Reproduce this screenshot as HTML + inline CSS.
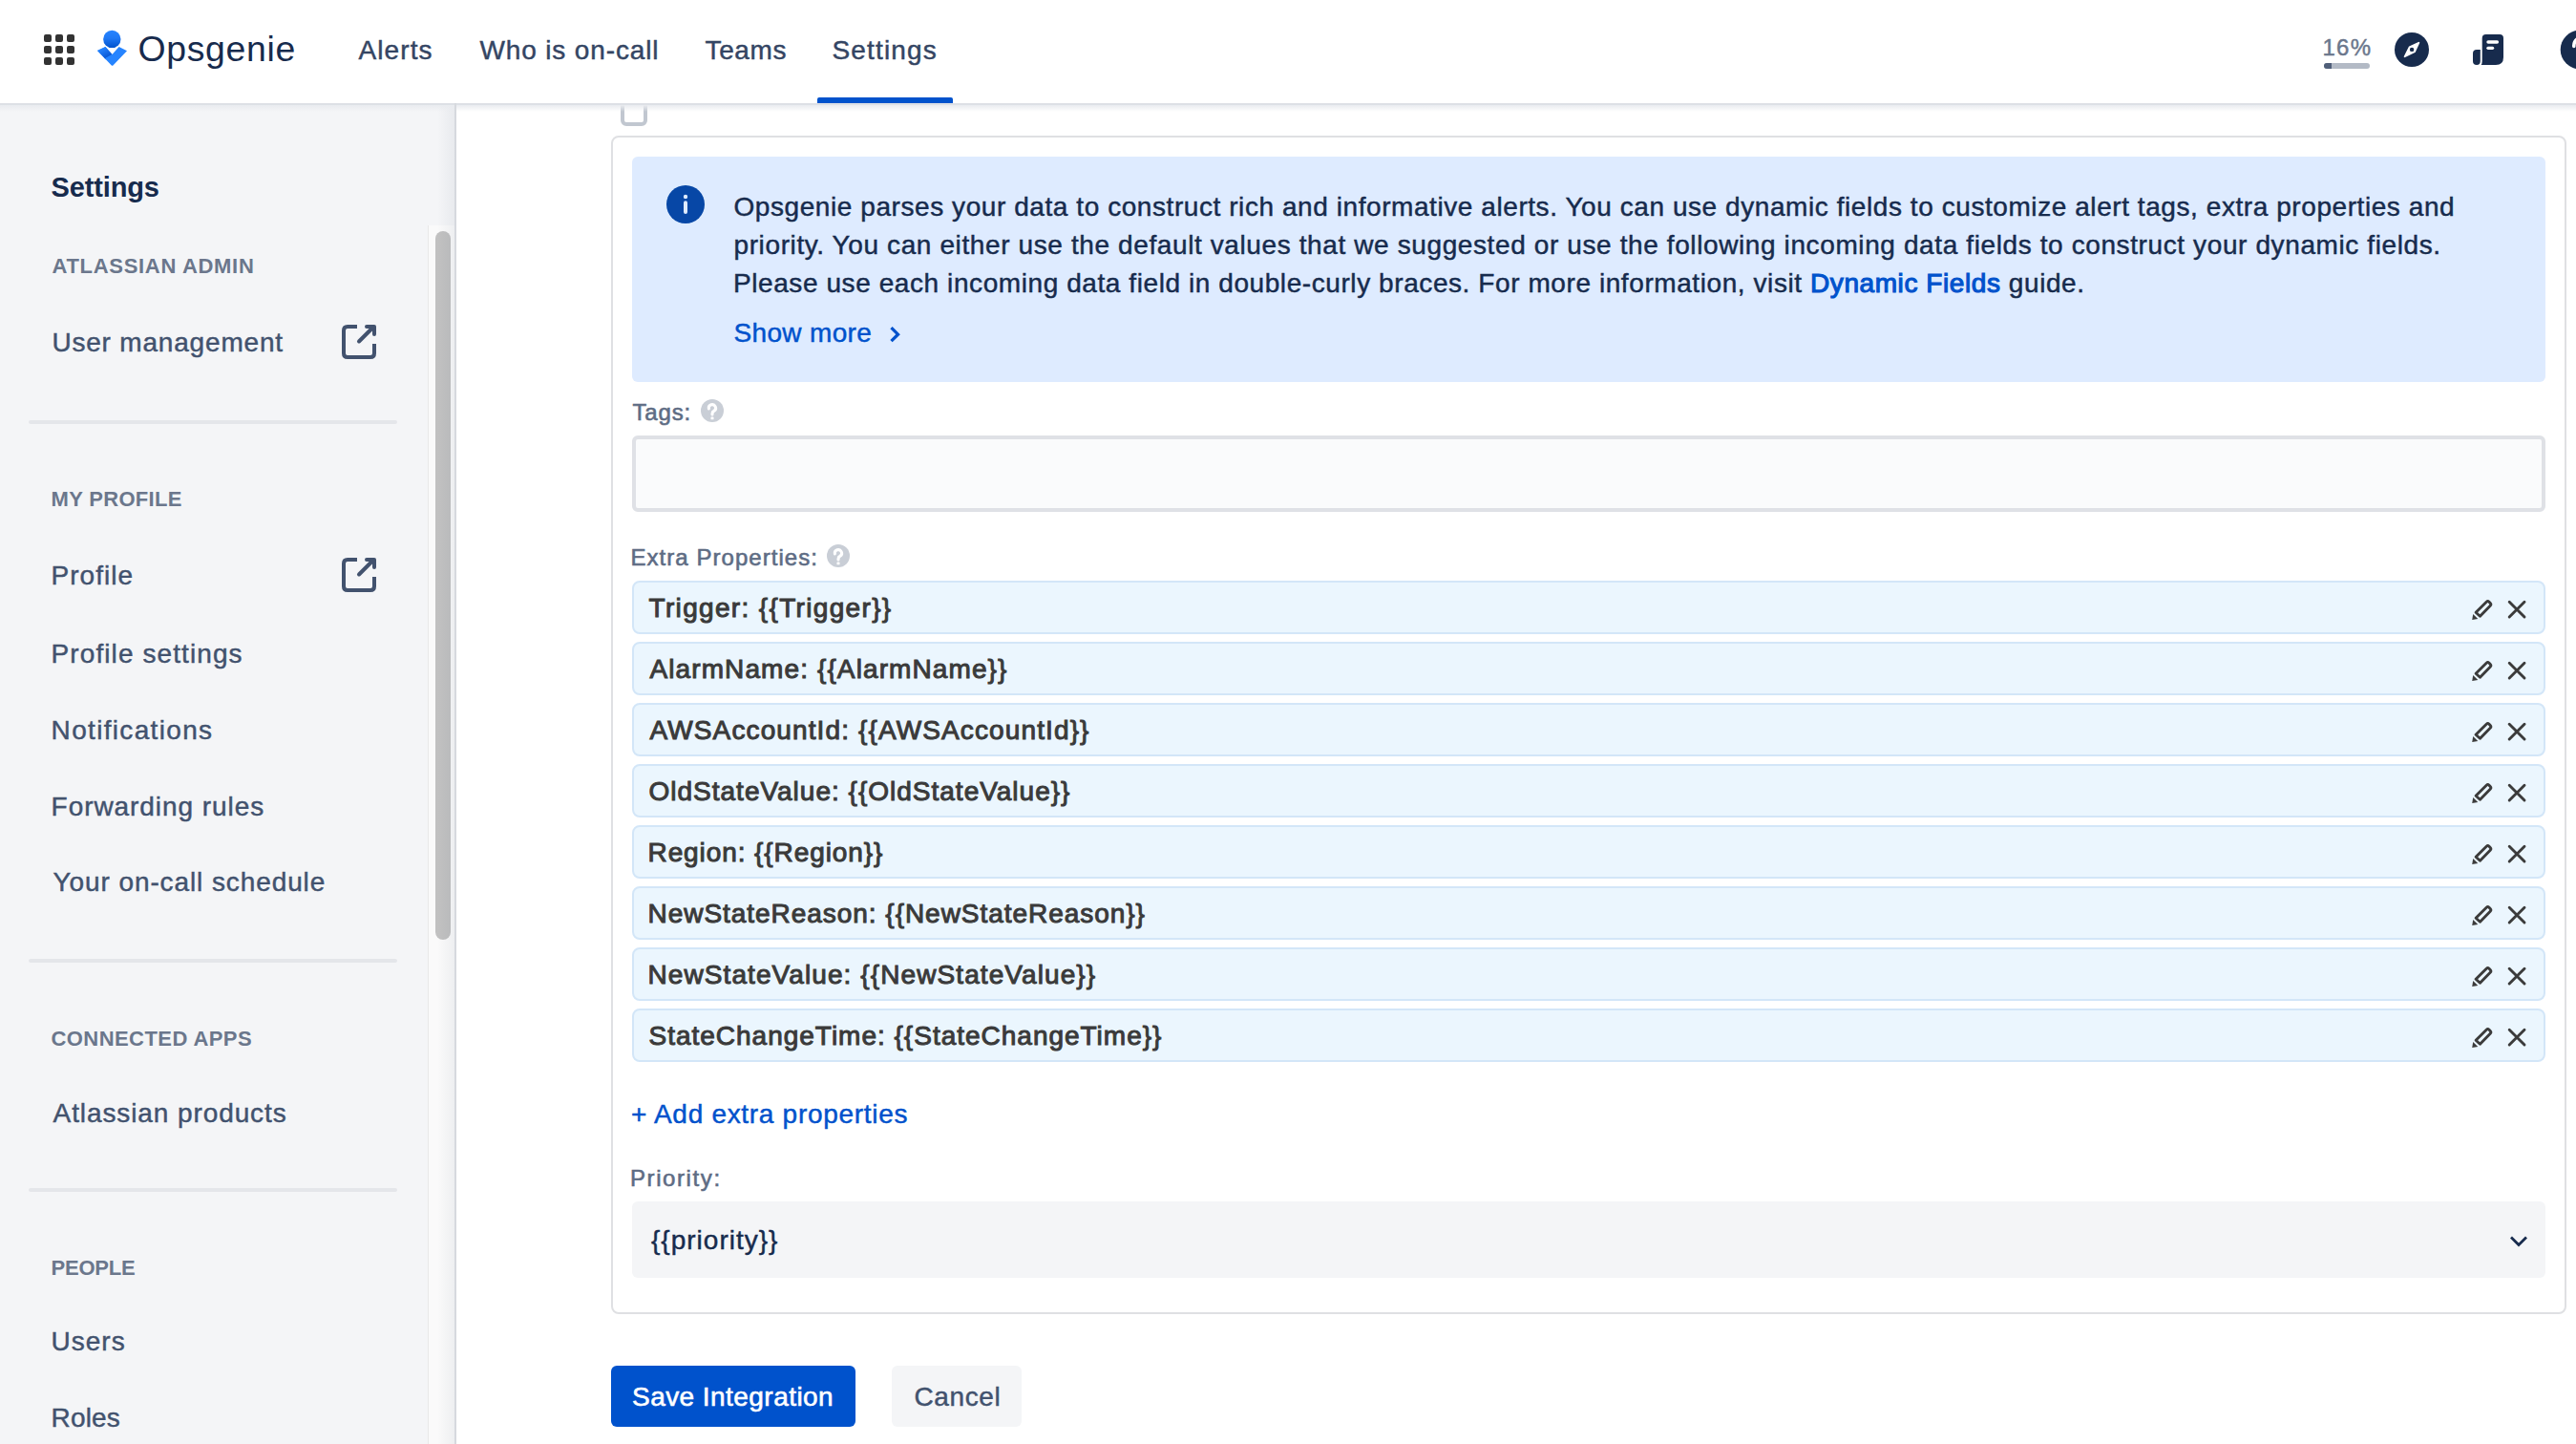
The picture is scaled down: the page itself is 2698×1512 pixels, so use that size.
<!DOCTYPE html>
<html><head><meta charset="utf-8">
<style>
html,body{margin:0;padding:0;width:2698px;height:1512px;overflow:hidden;background:#fff;}
body{position:relative;font-family:"Liberation Sans",sans-serif;}
.a{position:absolute;}
.t{position:absolute;white-space:nowrap;line-height:40px;font-family:"Liberation Sans",sans-serif;-webkit-text-stroke-width:0.45px;}
.sw0{-webkit-text-stroke-width:0!important}
.sw5{-webkit-text-stroke-width:0.6px!important}
.sw7{-webkit-text-stroke-width:1.0px!important}
</style></head><body>

<div class="a" style="left:650px;top:100px;width:28px;height:32px;box-sizing:border-box;border:4px solid #c1c7d0;border-radius:6px;"></div>
<!-- ============ HEADER ============ -->
<div class="a" style="left:0;top:0;width:2698px;height:108px;background:#fff;"></div>
<div class="a" style="left:0;top:108px;width:2698px;height:2px;background:#dde0e5;z-index:5"></div>
<div class="a" style="left:0;top:110px;width:2698px;height:7px;background:linear-gradient(#e9ebef,rgba(255,255,255,0));z-index:5"></div>

<!-- grid icon -->
<svg class="a" style="left:46px;top:36px" width="32" height="32" viewBox="0 0 32 32">
<g fill="#333">
<rect x="0" y="0" width="8" height="8" rx="2"/><rect x="12" y="0" width="8" height="8" rx="2"/><rect x="24" y="0" width="8" height="8" rx="2"/>
<rect x="0" y="12" width="8" height="8" rx="2"/><rect x="12" y="12" width="8" height="8" rx="2"/><rect x="24" y="12" width="8" height="8" rx="2"/>
<rect x="0" y="24" width="8" height="8" rx="2"/><rect x="12" y="24" width="8" height="8" rx="2"/><rect x="24" y="24" width="8" height="8" rx="2"/>
</g></svg>

<!-- logo -->
<svg class="a" style="left:100px;top:30px" width="36" height="42" viewBox="0 0 36 42">
<defs>
<linearGradient id="hg" x1="0" y1="0" x2="0" y2="1"><stop offset="0" stop-color="#2684ff"/><stop offset="0.45" stop-color="#1f78f5"/><stop offset="1" stop-color="#0052cc"/></linearGradient>
<linearGradient id="lg" gradientUnits="userSpaceOnUse" x1="6" y1="21" x2="11" y2="30"><stop offset="0" stop-color="#2684ff"/><stop offset="1" stop-color="#0a5ad6"/></linearGradient>
</defs>
<circle cx="17.3" cy="10.9" r="9.2" fill="url(#hg)"/>
<path d="M2 23 L10.4 19.1 L17.5 27 L24.6 18.9 L33 23.2 L18.4 38.4 Q17.6 39.2 16.8 38.4 Z" fill="#2684ff"/>
<path d="M2 23 L10.4 19.1 L17.5 27 L9.9 31.2 Z" fill="url(#lg)"/>
<path d="M9.6 31.5 L17.5 27 L18.2 27.8 L10.4 32.3 Z" fill="#2684ff"/>
</svg>

<div class="t sw0" id="opsg" style="left:144.5px;top:31px;font-size:37.4px;color:#172b4d;letter-spacing:0.68px;">Opsgenie</div>

<div class="t" id="nav1" style="left:375.5px;top:33px;font-size:28px;color:#344563;letter-spacing:1.10px">Alerts</div>
<div class="t" id="nav2" style="left:502.5px;top:33px;font-size:28px;color:#344563;letter-spacing:0.86px">Who is on-call</div>
<div class="t" id="nav3" style="left:738.5px;top:33px;font-size:28px;color:#344563;letter-spacing:0.65px">Teams</div>
<div class="t" id="navS" style="left:871.5px;top:33px;font-size:28px;color:#344563;letter-spacing:1.16px">Settings</div>
<div class="a" style="left:856px;top:102px;width:142px;height:6px;background:#0052cc;border-radius:2px 2px 0 0"></div>

<div class="t" id="pct" style="left:2432.5px;top:30px;font-size:24px;color:#6b778c;letter-spacing:1.25px">16%</div>
<div class="a" style="left:2434px;top:66px;width:48px;height:6px;background:#b3bac5;border-radius:3px;overflow:hidden"><div style="width:8px;height:6px;background:#505f79"></div></div>

<!-- compass -->
<svg class="a" style="left:2508px;top:34px" width="36" height="36" viewBox="0 0 36 36">
<circle cx="18" cy="18" r="18" fill="#172b4d"/>
<path d="M10.6 25.3 L20.9 20.3 L25.4 10.7 L15.6 15.4 Z" fill="#fff" stroke="#fff" stroke-width="1.8" stroke-linejoin="round"/>
<circle cx="18.1" cy="17.9" r="2.2" fill="#172b4d"/>
</svg>

<!-- doc icon -->
<svg class="a" style="left:2588px;top:34px" width="36" height="36" viewBox="0 0 36 36">
<path d="M15.7 2 H30 Q34 2 34 6 V26 Q34 34 26 34 H10.5 Q11.7 33 11.7 30 V6 Q11.7 2 15.7 2 Z" fill="#172b4d"/>
<path d="M6 17.9 H9.8 V30 Q9.8 34 6 34 Q2 34 2 30 V21.9 Q2 17.9 6 17.9 Z" fill="#172b4d"/>
<rect x="16.3" y="8.2" width="12.8" height="3.5" rx="1.75" fill="#fff"/>
<rect x="16.3" y="14.7" width="7.9" height="3.2" rx="1.6" fill="#fff"/>
</svg>

<!-- help icon (cut) -->
<svg class="a" style="left:2681px;top:31px" width="17" height="42" viewBox="0 0 17 42">
<circle cx="21" cy="21" r="20.3" fill="#172b4d"/>
<path d="M14.8 17.4 Q14.6 12.5 18.5 9.6" stroke="#fff" stroke-width="3.6" fill="none" stroke-linecap="round"/>
</svg>

<!-- ============ SIDEBAR ============ -->
<div class="a" style="left:0;top:108px;width:478px;height:1404px;background:#f4f5f7;"></div>

<div class="t sw0" id="sbS" style="left:53.6px;top:176px;font-size:29px;font-weight:700;color:#172b4d;letter-spacing:-0.15px">Settings</div>

<div class="t sw0" id="h1" style="left:54.5px;top:259px;font-size:22px;font-weight:700;color:#6b778c;letter-spacing:0.69px">ATLASSIAN ADMIN</div>
<div class="t" id="s1" style="left:54.4px;top:339px;font-size:28px;color:#42526e;letter-spacing:0.81px">User management</div>
<svg class="a" style="left:358px;top:340px" width="36" height="36" viewBox="0 0 36 36"><g fill="none" stroke="#42526e" stroke-width="4"><path d="M16 2 H6 Q2 2 2 6 V30 Q2 34 6 34 H30 Q34 34 34 30 V20" /><path d="M26 2 H34 V10" stroke-linecap="round" stroke-linejoin="round"/><path d="M18 17.5 L32.5 3" stroke-linecap="round"/></g></svg>
<div class="a" style="left:30px;top:440px;width:386px;height:4px;background:#e4e6ea;border-radius:2px"></div>

<div class="t sw0" id="h2" style="left:53.5px;top:503px;font-size:22px;font-weight:700;color:#6b778c;letter-spacing:0.32px">MY PROFILE</div>
<div class="t" id="s2" style="left:53.6px;top:583px;font-size:28px;color:#42526e;letter-spacing:1.01px">Profile</div>
<svg class="a" style="left:358px;top:584px" width="36" height="36" viewBox="0 0 36 36"><g fill="none" stroke="#42526e" stroke-width="4"><path d="M16 2 H6 Q2 2 2 6 V30 Q2 34 6 34 H30 Q34 34 34 30 V20" /><path d="M26 2 H34 V10" stroke-linecap="round" stroke-linejoin="round"/><path d="M18 17.5 L32.5 3" stroke-linecap="round"/></g></svg>
<div class="t" id="s3" style="left:53.6px;top:665px;font-size:28px;color:#42526e;letter-spacing:1.09px">Profile settings</div>
<div class="t" id="s4" style="left:53.6px;top:745px;font-size:28px;color:#42526e;letter-spacing:1.33px">Notifications</div>
<div class="t" id="s5" style="left:53.6px;top:825px;font-size:28px;color:#42526e;letter-spacing:0.94px">Forwarding rules</div>
<div class="t" id="s6" style="left:55.6px;top:904px;font-size:28px;color:#42526e;letter-spacing:0.90px">Your on-call schedule</div>
<div class="a" style="left:30px;top:1004px;width:386px;height:4px;background:#e4e6ea;border-radius:2px"></div>

<div class="t sw0" id="h3" style="left:53.5px;top:1068px;font-size:22px;font-weight:700;color:#6b778c;letter-spacing:0.43px">CONNECTED APPS</div>
<div class="t" id="s7" style="left:55.6px;top:1146px;font-size:28px;color:#42526e;letter-spacing:0.90px">Atlassian products</div>
<div class="a" style="left:30px;top:1244px;width:386px;height:4px;background:#e4e6ea;border-radius:2px"></div>

<div class="t sw0" id="h4" style="left:53.5px;top:1308px;font-size:22px;font-weight:700;color:#6b778c;letter-spacing:-0.20px">PEOPLE</div>
<div class="t" id="s8" style="left:53.6px;top:1385px;font-size:28px;color:#42526e;letter-spacing:0.98px">Users</div>
<div class="t" id="s9" style="left:53.6px;top:1465px;font-size:28px;color:#42526e;letter-spacing:0.17px">Roles</div>

<!-- scrollbar -->
<div class="a" style="left:448px;top:236px;width:28px;height:1276px;background:#fafafa;border-left:1px solid #e8e8e8;box-sizing:border-box"></div>
<div class="a" style="left:456px;top:242px;width:16px;height:742px;background:#c1c1c1;border-radius:8px"></div>
<div class="a" style="left:458px;top:108px;width:18px;height:1404px;background:linear-gradient(90deg,rgba(9,30,66,0),rgba(9,30,66,0.05));"></div>
<div class="a" style="left:476px;top:108px;width:2px;height:1404px;background:#d6d9de;z-index:6"></div>

<!-- ============ MAIN ============ -->

<div class="a" style="left:640px;top:142px;width:2048px;height:1234px;box-sizing:border-box;border:2px solid #dfe0e3;border-radius:8px;"></div>

<!-- info box -->
<div class="a" style="left:662px;top:164px;width:2004px;height:236px;background:#deebff;border-radius:6px;"></div>
<svg class="a" style="left:698px;top:194px" width="40" height="40" viewBox="0 0 40 40"><circle cx="20" cy="20" r="20" fill="#0747a6"/><circle cx="20" cy="12" r="2.2" fill="#deebff"/><rect x="18" y="16.3" width="4" height="13.8" rx="2" fill="#deebff"/></svg>
<div class="t" id="info1" style="left:768.5px;top:197px;font-size:28px;color:#172b4d;letter-spacing:0.57px">Opsgenie parses your data to construct rich and informative alerts. You can use dynamic fields to customize alert tags, extra properties and</div>
<div class="t" id="info2" style="left:768.5px;top:237px;font-size:28px;color:#172b4d;letter-spacing:0.61px">priority. You can either use the default values that we suggested or use the following incoming data fields to construct your dynamic fields.</div>
<div class="t" id="info3" style="left:768.0px;top:277px;font-size:28px;color:#172b4d;letter-spacing:0.58px">Please use each incoming data field in double-curly braces. For more information, visit <span style="color:#0052cc;-webkit-text-stroke-width:1.1px">Dynamic Fields</span> guide.</div>
<div class="t" id="showmore" style="left:768.5px;top:329px;font-size:28px;color:#0052cc;letter-spacing:0.34px">Show more</div>
<svg class="a" style="left:930px;top:340px" width="16" height="20" viewBox="0 0 16 20"><path d="M3.5 3.2 L10.5 10.2 L3.5 17.2" fill="none" stroke="#0052cc" stroke-width="3.3"/></svg>

<!-- Tags -->
<div class="t sw5" id="tags" style="left:662.5px;top:412px;font-size:24px;color:#5e6c84;letter-spacing:0.85px">Tags:</div>
<svg class="a" style="left:734px;top:418px" width="24" height="24" viewBox="0 0 24 24"><circle cx="12" cy="12" r="12" fill="#c9ced6"/><path d="M8.4 9.9 A3.6 3.6 0 1 1 14 12.2 Q12 13.3 12 15.2 V16" fill="none" stroke="#fff" stroke-width="3.1" stroke-linecap="round"/><rect x="10.5" y="18.5" width="3" height="2.8" rx="0.6" fill="#fff"/></svg>
<div class="a" style="left:662px;top:456px;width:2004px;height:80px;box-sizing:border-box;background:#fafbfc;border:4px solid #dfe1e6;border-radius:6px;"></div>

<!-- Extra properties -->
<div class="t sw5" id="extra" style="left:660.5px;top:564px;font-size:24px;color:#5e6c84;letter-spacing:1.04px">Extra Properties:</div>
<svg class="a" style="left:866px;top:570px" width="24" height="24" viewBox="0 0 24 24"><circle cx="12" cy="12" r="12" fill="#c9ced6"/><path d="M8.4 9.9 A3.6 3.6 0 1 1 14 12.2 Q12 13.3 12 15.2 V16" fill="none" stroke="#fff" stroke-width="3.1" stroke-linecap="round"/><rect x="10.5" y="18.5" width="3" height="2.8" rx="0.6" fill="#fff"/></svg>

<!--ROWS-->
<div class="a" style="left:662px;top:608px;width:2004px;height:56px;box-sizing:border-box;background:#ebf6fe;border:2px solid #d3e6f8;border-radius:8px;"></div>
<div class="t sw7" id="row0" style="left:679.5px;top:617px;font-size:28px;color:#3a3a3a;letter-spacing:1.34px">Trigger: {{Trigger}}</div>
<svg class="a" style="left:2586px;top:616px" width="64" height="40" viewBox="0 0 64 40"><g fill="#3b3b3b"><path d="M3.2 32.9 L4.2 27.1 L9.3 31.9 Z"/></g><g fill="none" stroke="#3b3b3b" stroke-width="2.9"><path d="M7.1 25.2 L18.2 14.2 Q19.6 12.9 21 14.3 L22.2 15.6 Q23.5 17 22.2 18.3 L11.5 29.3 Z" stroke-linejoin="round"/><path d="M42.2 14.2 L58 30 M58 14.2 L42.2 30" stroke-linecap="round"/></g></svg>
<div class="a" style="left:662px;top:672px;width:2004px;height:56px;box-sizing:border-box;background:#ebf6fe;border:2px solid #d3e6f8;border-radius:8px;"></div>
<div class="t sw7" id="row1" style="left:680.5px;top:681px;font-size:28px;color:#3a3a3a;letter-spacing:1.10px">AlarmName: {{AlarmName}}</div>
<svg class="a" style="left:2586px;top:680px" width="64" height="40" viewBox="0 0 64 40"><g fill="#3b3b3b"><path d="M3.2 32.9 L4.2 27.1 L9.3 31.9 Z"/></g><g fill="none" stroke="#3b3b3b" stroke-width="2.9"><path d="M7.1 25.2 L18.2 14.2 Q19.6 12.9 21 14.3 L22.2 15.6 Q23.5 17 22.2 18.3 L11.5 29.3 Z" stroke-linejoin="round"/><path d="M42.2 14.2 L58 30 M58 14.2 L42.2 30" stroke-linecap="round"/></g></svg>
<div class="a" style="left:662px;top:736px;width:2004px;height:56px;box-sizing:border-box;background:#ebf6fe;border:2px solid #d3e6f8;border-radius:8px;"></div>
<div class="t sw7" id="row2" style="left:680.5px;top:745px;font-size:28px;color:#3a3a3a;letter-spacing:1.12px">AWSAccountId: {{AWSAccountId}}</div>
<svg class="a" style="left:2586px;top:744px" width="64" height="40" viewBox="0 0 64 40"><g fill="#3b3b3b"><path d="M3.2 32.9 L4.2 27.1 L9.3 31.9 Z"/></g><g fill="none" stroke="#3b3b3b" stroke-width="2.9"><path d="M7.1 25.2 L18.2 14.2 Q19.6 12.9 21 14.3 L22.2 15.6 Q23.5 17 22.2 18.3 L11.5 29.3 Z" stroke-linejoin="round"/><path d="M42.2 14.2 L58 30 M58 14.2 L42.2 30" stroke-linecap="round"/></g></svg>
<div class="a" style="left:662px;top:800px;width:2004px;height:56px;box-sizing:border-box;background:#ebf6fe;border:2px solid #d3e6f8;border-radius:8px;"></div>
<div class="t sw7" id="row3" style="left:679.5px;top:809px;font-size:28px;color:#3a3a3a;letter-spacing:1.00px">OldStateValue: {{OldStateValue}}</div>
<svg class="a" style="left:2586px;top:808px" width="64" height="40" viewBox="0 0 64 40"><g fill="#3b3b3b"><path d="M3.2 32.9 L4.2 27.1 L9.3 31.9 Z"/></g><g fill="none" stroke="#3b3b3b" stroke-width="2.9"><path d="M7.1 25.2 L18.2 14.2 Q19.6 12.9 21 14.3 L22.2 15.6 Q23.5 17 22.2 18.3 L11.5 29.3 Z" stroke-linejoin="round"/><path d="M42.2 14.2 L58 30 M58 14.2 L42.2 30" stroke-linecap="round"/></g></svg>
<div class="a" style="left:662px;top:864px;width:2004px;height:56px;box-sizing:border-box;background:#ebf6fe;border:2px solid #d3e6f8;border-radius:8px;"></div>
<div class="t sw7" id="row4" style="left:678.5px;top:873px;font-size:28px;color:#3a3a3a;letter-spacing:0.91px">Region: {{Region}}</div>
<svg class="a" style="left:2586px;top:872px" width="64" height="40" viewBox="0 0 64 40"><g fill="#3b3b3b"><path d="M3.2 32.9 L4.2 27.1 L9.3 31.9 Z"/></g><g fill="none" stroke="#3b3b3b" stroke-width="2.9"><path d="M7.1 25.2 L18.2 14.2 Q19.6 12.9 21 14.3 L22.2 15.6 Q23.5 17 22.2 18.3 L11.5 29.3 Z" stroke-linejoin="round"/><path d="M42.2 14.2 L58 30 M58 14.2 L42.2 30" stroke-linecap="round"/></g></svg>
<div class="a" style="left:662px;top:928px;width:2004px;height:56px;box-sizing:border-box;background:#ebf6fe;border:2px solid #d3e6f8;border-radius:8px;"></div>
<div class="t sw7" id="row5" style="left:678.5px;top:937px;font-size:28px;color:#3a3a3a;letter-spacing:0.96px">NewStateReason: {{NewStateReason}}</div>
<svg class="a" style="left:2586px;top:936px" width="64" height="40" viewBox="0 0 64 40"><g fill="#3b3b3b"><path d="M3.2 32.9 L4.2 27.1 L9.3 31.9 Z"/></g><g fill="none" stroke="#3b3b3b" stroke-width="2.9"><path d="M7.1 25.2 L18.2 14.2 Q19.6 12.9 21 14.3 L22.2 15.6 Q23.5 17 22.2 18.3 L11.5 29.3 Z" stroke-linejoin="round"/><path d="M42.2 14.2 L58 30 M58 14.2 L42.2 30" stroke-linecap="round"/></g></svg>
<div class="a" style="left:662px;top:992px;width:2004px;height:56px;box-sizing:border-box;background:#ebf6fe;border:2px solid #d3e6f8;border-radius:8px;"></div>
<div class="t sw7" id="row6" style="left:678.5px;top:1001px;font-size:28px;color:#3a3a3a;letter-spacing:1.09px">NewStateValue: {{NewStateValue}}</div>
<svg class="a" style="left:2586px;top:1000px" width="64" height="40" viewBox="0 0 64 40"><g fill="#3b3b3b"><path d="M3.2 32.9 L4.2 27.1 L9.3 31.9 Z"/></g><g fill="none" stroke="#3b3b3b" stroke-width="2.9"><path d="M7.1 25.2 L18.2 14.2 Q19.6 12.9 21 14.3 L22.2 15.6 Q23.5 17 22.2 18.3 L11.5 29.3 Z" stroke-linejoin="round"/><path d="M42.2 14.2 L58 30 M58 14.2 L42.2 30" stroke-linecap="round"/></g></svg>
<div class="a" style="left:662px;top:1056px;width:2004px;height:56px;box-sizing:border-box;background:#ebf6fe;border:2px solid #d3e6f8;border-radius:8px;"></div>
<div class="t sw7" id="row7" style="left:679.5px;top:1065px;font-size:28px;color:#3a3a3a;letter-spacing:0.99px">StateChangeTime: {{StateChangeTime}}</div>
<svg class="a" style="left:2586px;top:1064px" width="64" height="40" viewBox="0 0 64 40"><g fill="#3b3b3b"><path d="M3.2 32.9 L4.2 27.1 L9.3 31.9 Z"/></g><g fill="none" stroke="#3b3b3b" stroke-width="2.9"><path d="M7.1 25.2 L18.2 14.2 Q19.6 12.9 21 14.3 L22.2 15.6 Q23.5 17 22.2 18.3 L11.5 29.3 Z" stroke-linejoin="round"/><path d="M42.2 14.2 L58 30 M58 14.2 L42.2 30" stroke-linecap="round"/></g></svg>
<!--/ROWS-->

<!-- add extra -->
<div class="t" id="add" style="left:661.0px;top:1147px;font-size:28px;color:#0052cc;letter-spacing:0.70px">+ Add extra properties</div>

<div class="t sw5" id="prio" style="left:660.0px;top:1214px;font-size:24px;color:#5e6c84;letter-spacing:1.59px">Priority:</div>
<div class="a" style="left:662px;top:1258px;width:2004px;height:80px;background:#f4f5f7;border-radius:6px;"></div>
<div class="t" id="priov" style="left:682.0px;top:1279px;font-size:28px;color:#172b4d;letter-spacing:1.00px">{{priority}}</div>
<svg class="a" style="left:2626px;top:1291px" width="24" height="20" viewBox="0 0 24 20"><path d="M4 4.5 L12 12.5 L20 4.5" fill="none" stroke="#172b4d" stroke-width="2.8"/></svg>

<!-- buttons -->
<div class="a" style="left:640px;top:1430px;width:256px;height:64px;background:#0052cc;border-radius:6px;"></div>
<div class="t sw5" id="save" style="left:662.0px;top:1443px;font-size:28px;color:#fff;letter-spacing:0.45px">Save Integration</div>
<div class="a" style="left:934px;top:1430px;width:136px;height:64px;background:#f4f5f7;border-radius:6px;"></div>
<div class="t" id="cancel" style="left:957.5px;top:1443px;font-size:28px;color:#42526e;letter-spacing:0.60px">Cancel</div>

</body></html>
